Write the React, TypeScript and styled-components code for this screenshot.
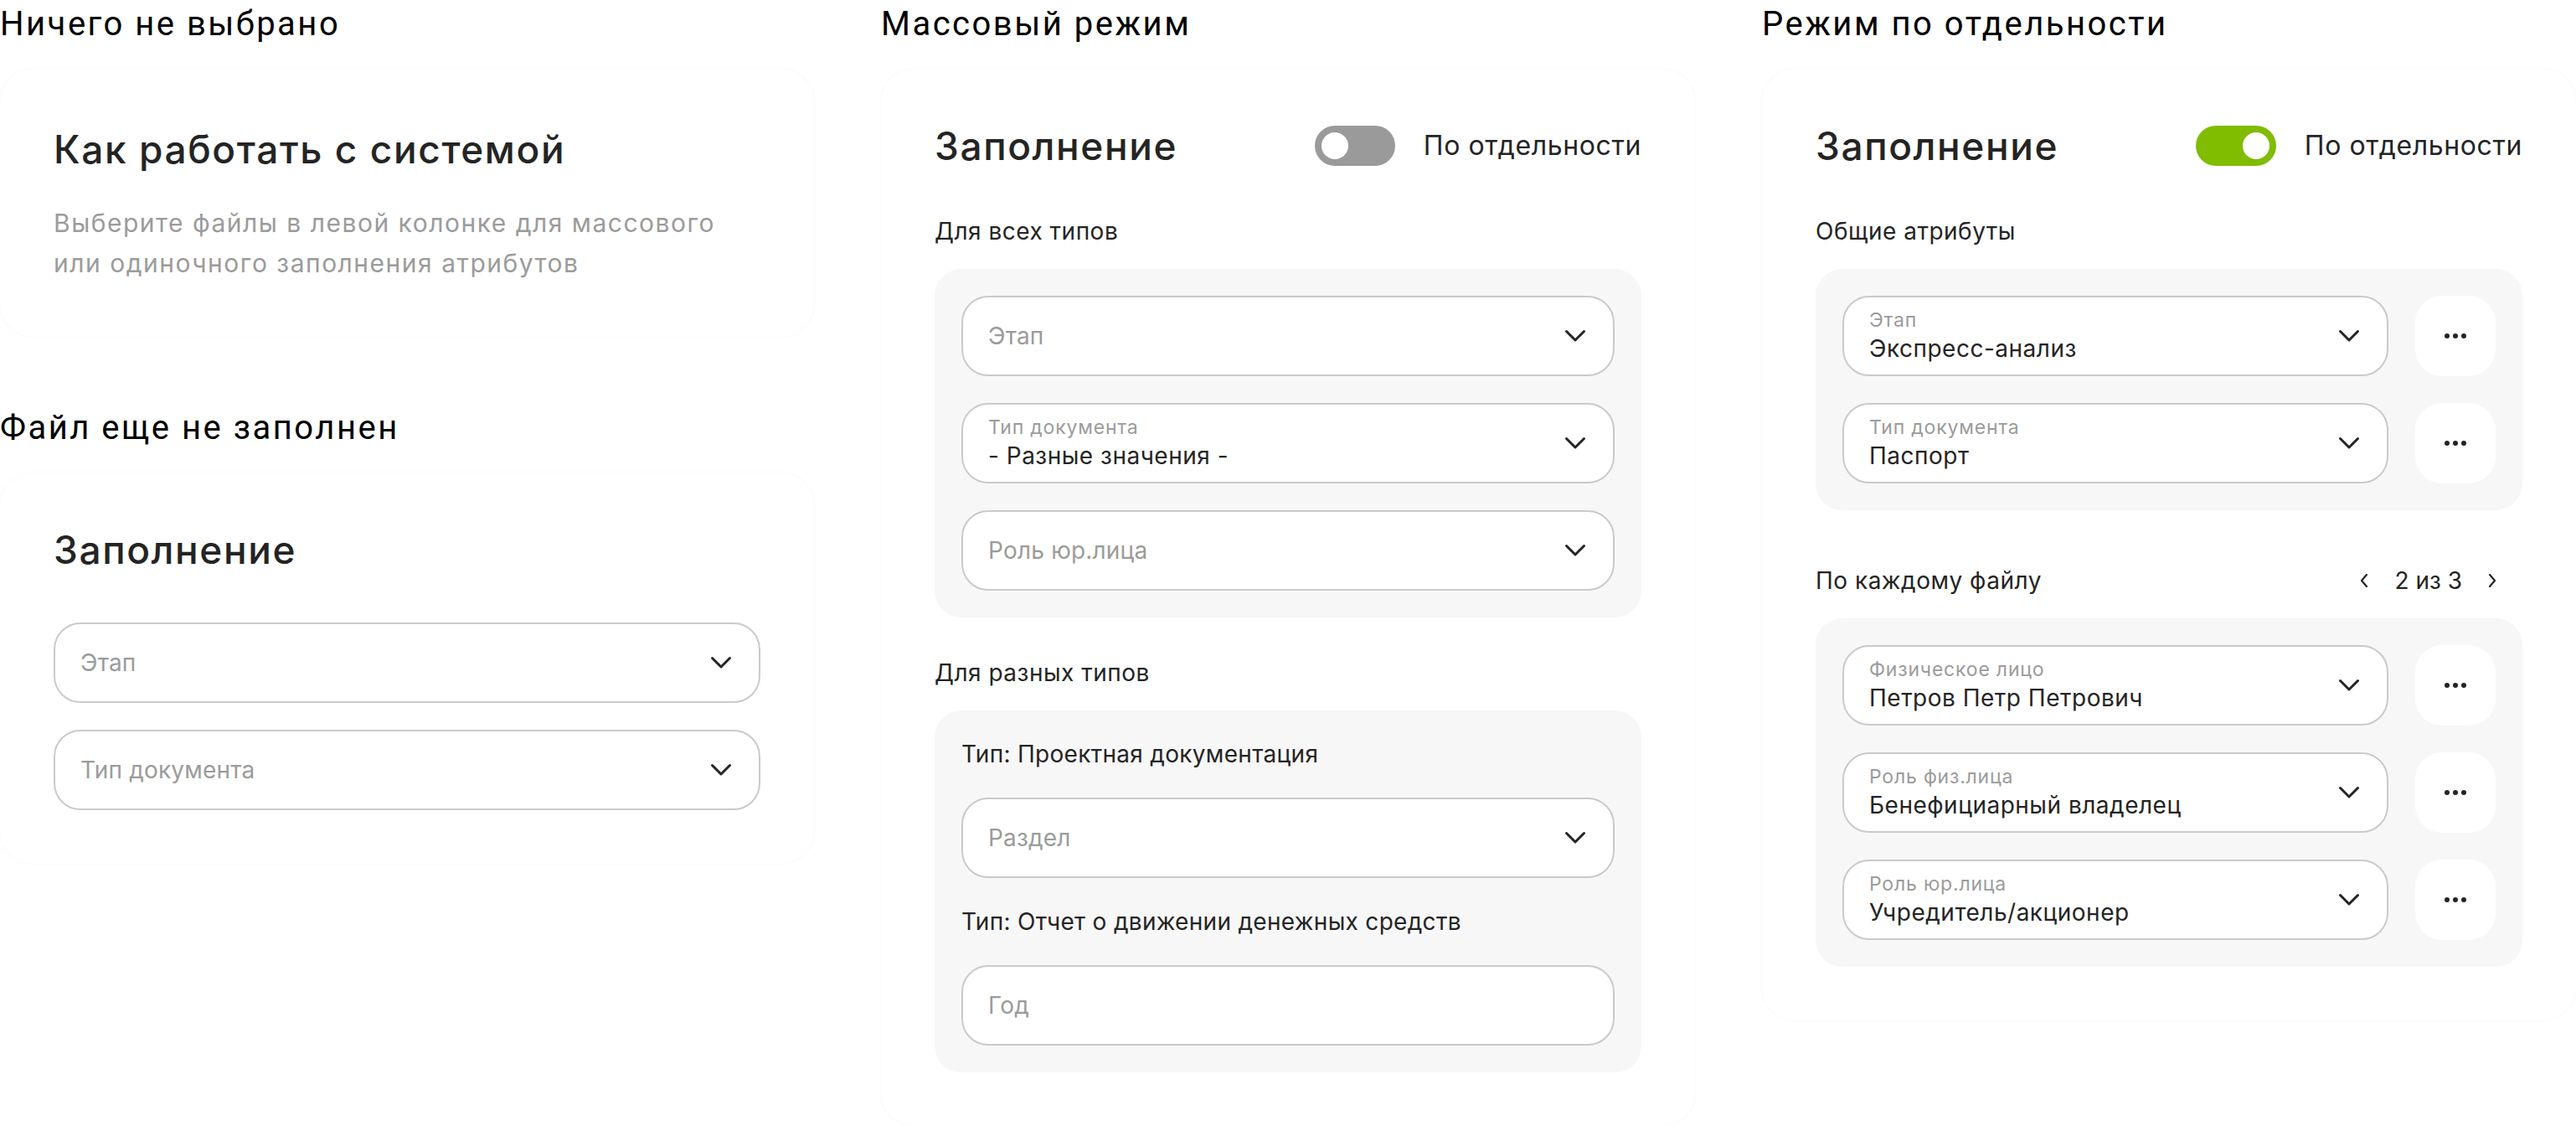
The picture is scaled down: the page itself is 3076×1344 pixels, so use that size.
import React from 'react';
import styled, { createGlobalStyle } from 'styled-components';

const GlobalStyle = createGlobalStyle`
  html, body { margin: 0; padding: 0; background: #ffffff; }
  body { font-family: Inter, "Noto Sans", sans-serif; color: #222222; }
  * { box-sizing: border-box; }
`;

const Page = styled.div`
  display: grid;
  grid-template-columns: repeat(3, 972px);
  column-gap: 80px;
  width: 3076px;
  align-items: start;
`;

const Column = styled.div`
  display: flex;
  flex-direction: column;
`;

const Group = styled.section<{ $offset?: number }>`
  display: flex;
  flex-direction: column;
  gap: 24px;
  margin-top: ${(p) => p.$offset ?? 0}px;
`;

const ColumnTitle = styled.h2`
  margin: 0;
  font-family: Roboto, "Liberation Sans", sans-serif;
  font-weight: 400;
  font-size: 40px;
  letter-spacing: 2.5px;
  line-height: 58px;
  color: #000000;
`;

const Card = styled.div<{ $padTop?: number; $gap: number }>`
  background: #ffffff;
  border-radius: 40px;
  padding: ${(p) => p.$padTop ?? 64}px 64px 64px;
  box-shadow: 0 0 3px rgba(0, 0, 0, 0.05);
  display: flex;
  flex-direction: column;
  gap: ${(p) => p.$gap}px;
`;

const HeaderRow = styled.div`
  display: flex;
  align-items: center;
  justify-content: space-between;
  height: 56px;
`;

const Heading = styled.h1`
  margin: 0;
  font-size: 46px;
  letter-spacing: 1.6px;
  line-height: 56px;
  font-weight: 500;
  color: #242424;
`;

const Lead = styled.p`
  margin: 0;
  font-size: 30px;
  letter-spacing: 1.5px;
  line-height: 48px;
  color: #9b9b9b;
`;

const ToggleWrap = styled.div`
  display: flex;
  align-items: center;
  gap: 34px;
`;

const Track = styled.span<{ $on: boolean }>`
  width: 96px;
  height: 48px;
  border-radius: 24px;
  background: ${(p) => (p.$on ? '#80bc00' : '#9a9a9a')};
  display: flex;
  align-items: center;
  justify-content: ${(p) => (p.$on ? 'flex-end' : 'flex-start')};
  padding: 0 8px;
`;

const Knob = styled.span`
  width: 32px;
  height: 32px;
  border-radius: 50%;
  background: #ffffff;
`;

const ToggleText = styled.span`
  font-size: 32px;
  letter-spacing: 0.6px;
  line-height: 40px;
  color: #242424;
`;

const Sections = styled.div`
  display: flex;
  flex-direction: column;
`;

const Section = styled.div<{ $offset?: number }>`
  display: flex;
  flex-direction: column;
  gap: 25px;
  margin-top: ${(p) => p.$offset ?? 0}px;
`;

const SectionHead = styled.div`
  display: flex;
  align-items: center;
  justify-content: space-between;
  height: 40px;
`;

const SectionTitle = styled.h3`
  margin: 0;
  font-size: 28px;
  letter-spacing: 0.5px;
  font-weight: 400;
  line-height: 40px;
  color: #242424;
`;

const Panel = styled.div`
  background: #f7f7f7;
  border-radius: 32px;
  padding: 32px;
  display: flex;
  flex-direction: column;
  gap: 32px;
`;

const Stack = styled.div`
  display: flex;
  flex-direction: column;
  gap: 32px;
`;

const TypeLabel = styled.div`
  font-size: 28px;
  letter-spacing: 0.3px;
  line-height: 40px;
  color: #242424;
`;

const FieldRow = styled.div`
  display: flex;
  gap: 32px;
`;

const Field = styled.div`
  flex: 1 1 auto;
  min-width: 0;
  height: 96px;
  border: 2px solid #cacaca;
  border-radius: 32px;
  background: #ffffff;
  display: flex;
  align-items: center;
  padding: 0 32px 0 30px;
  gap: 16px;
`;

const FieldText = styled.div`
  flex: 1;
  display: flex;
  flex-direction: column;
  gap: 2px;
`;

const FieldLabel = styled.span`
  font-size: 23px;
  letter-spacing: 0.8px;
  line-height: 28px;
  color: #9b9b9b;
`;

const FieldValue = styled.span<{ $placeholder?: boolean }>`
  font-size: 28px;
  letter-spacing: ${(p) => (p.$placeholder ? 0.2 : 0.5)}px;
  line-height: 36px;
  color: ${(p) => (p.$placeholder ? '#9b9b9b' : '#242424')};
`;

const MoreButton = styled.button`
  flex: none;
  width: 96px;
  height: 96px;
  border: none;
  border-radius: 32px;
  background: #ffffff;
  display: flex;
  align-items: center;
  justify-content: center;
  padding: 0;
`;

const Pager = styled.div`
  display: flex;
  align-items: center;
  gap: 30px;
  padding-right: 30px;
  font-size: 28px;
  line-height: 40px;
  color: #242424;
`;

const PagerArrow = styled.button`
  background: none;
  border: none;
  padding: 0;
  display: flex;
`;

const Chevron = () => (
  <svg width="26" height="16" viewBox="0 0 26 16" fill="none">
    <path d="M2.5 2.5 L13 13 L23.5 2.5" stroke="#242424" strokeWidth="3" strokeLinecap="round" strokeLinejoin="round" />
  </svg>
);

const Dots = () => (
  <svg width="28" height="8" viewBox="0 0 28 8">
    <circle cx="4" cy="4" r="3" fill="#242424" />
    <circle cx="14" cy="4" r="3" fill="#242424" />
    <circle cx="24" cy="4" r="3" fill="#242424" />
  </svg>
);

const ArrowLeft = () => (
  <svg width="12" height="18" viewBox="0 0 12 18" fill="none">
    <path d="M9 2 L3 9 L9 16" stroke="#242424" strokeWidth="2.2" strokeLinecap="round" strokeLinejoin="round" />
  </svg>
);

const ArrowRight = () => (
  <svg width="12" height="18" viewBox="0 0 12 18" fill="none">
    <path d="M3 2 L9 9 L3 16" stroke="#242424" strokeWidth="2.2" strokeLinecap="round" strokeLinejoin="round" />
  </svg>
);

type SelectProps = { label?: string; value?: string; placeholder?: string; chevron?: boolean };

const Select = ({ label, value, placeholder, chevron = true }: SelectProps) => (
  <Field>
    <FieldText>
      {label && <FieldLabel>{label}</FieldLabel>}
      {value ? <FieldValue>{value}</FieldValue> : <FieldValue $placeholder>{placeholder}</FieldValue>}
    </FieldText>
    {chevron && <Chevron />}
  </Field>
);

const AttrRow = (props: SelectProps) => (
  <FieldRow>
    <Select {...props} />
    <MoreButton aria-label="Ещё">
      <Dots />
    </MoreButton>
  </FieldRow>
);

const Toggle = ({ on }: { on: boolean }) => (
  <ToggleWrap>
    <Track $on={on}>
      <Knob />
    </Track>
    <ToggleText>По отдельности</ToggleText>
  </ToggleWrap>
);

export default function App() {
  return (
    <>
      <GlobalStyle />
      <Page>
        <Column>
          <Group>
            <ColumnTitle>Ничего не выбрано</ColumnTitle>
            <Card $padTop={68} $gap={36}>
              <Heading>Как работать с системой</Heading>
              <Lead>
                Выберите файлы в левой колонке для массового
                <br />
                или одиночного заполнения атрибутов
              </Lead>
            </Card>
          </Group>
          <Group $offset={80}>
            <ColumnTitle>Файл еще не заполнен</ColumnTitle>
            <Card $gap={59}>
              <Heading>Заполнение</Heading>
              <Stack>
                <Select placeholder="Этап" />
                <Select placeholder="Тип документа" />
              </Stack>
            </Card>
          </Group>
        </Column>

        <Column>
          <Group>
            <ColumnTitle>Массовый режим</ColumnTitle>
            <Card $gap={54}>
              <HeaderRow>
                <Heading>Заполнение</Heading>
                <Toggle on={false} />
              </HeaderRow>
              <Sections>
                <Section>
                  <SectionHead>
                    <SectionTitle>Для всех типов</SectionTitle>
                  </SectionHead>
                  <Panel>
                    <Select placeholder="Этап" />
                    <Select label="Тип документа" value="- Разные значения -" />
                    <Select placeholder="Роль юр.лица" />
                  </Panel>
                </Section>
                <Section $offset={46}>
                  <SectionHead>
                    <SectionTitle>Для разных типов</SectionTitle>
                  </SectionHead>
                  <Panel>
                    <TypeLabel>Тип: Проектная документация</TypeLabel>
                    <Select placeholder="Раздел" />
                    <TypeLabel>Тип: Отчет о движении денежных средств</TypeLabel>
                    <Select placeholder="Год" chevron={false} />
                  </Panel>
                </Section>
              </Sections>
            </Card>
          </Group>
        </Column>

        <Column>
          <Group>
            <ColumnTitle>Режим по отдельности</ColumnTitle>
            <Card $gap={54}>
              <HeaderRow>
                <Heading>Заполнение</Heading>
                <Toggle on />
              </HeaderRow>
              <Sections>
                <Section>
                  <SectionHead>
                    <SectionTitle>Общие атрибуты</SectionTitle>
                  </SectionHead>
                  <Panel>
                    <AttrRow label="Этап" value="Экспресс-анализ" />
                    <AttrRow label="Тип документа" value="Паспорт" />
                  </Panel>
                </Section>
                <Section $offset={64}>
                  <SectionHead>
                    <SectionTitle>По каждому файлу</SectionTitle>
                    <Pager>
                      <PagerArrow aria-label="Назад">
                        <ArrowLeft />
                      </PagerArrow>
                      <span>2 из 3</span>
                      <PagerArrow aria-label="Вперёд">
                        <ArrowRight />
                      </PagerArrow>
                    </Pager>
                  </SectionHead>
                  <Panel>
                    <AttrRow label="Физическое лицо" value="Петров Петр Петрович" />
                    <AttrRow label="Роль физ.лица" value="Бенефициарный владелец" />
                    <AttrRow label="Роль юр.лица" value="Учредитель/акционер" />
                  </Panel>
                </Section>
              </Sections>
            </Card>
          </Group>
        </Column>
      </Page>
    </>
  );
}
